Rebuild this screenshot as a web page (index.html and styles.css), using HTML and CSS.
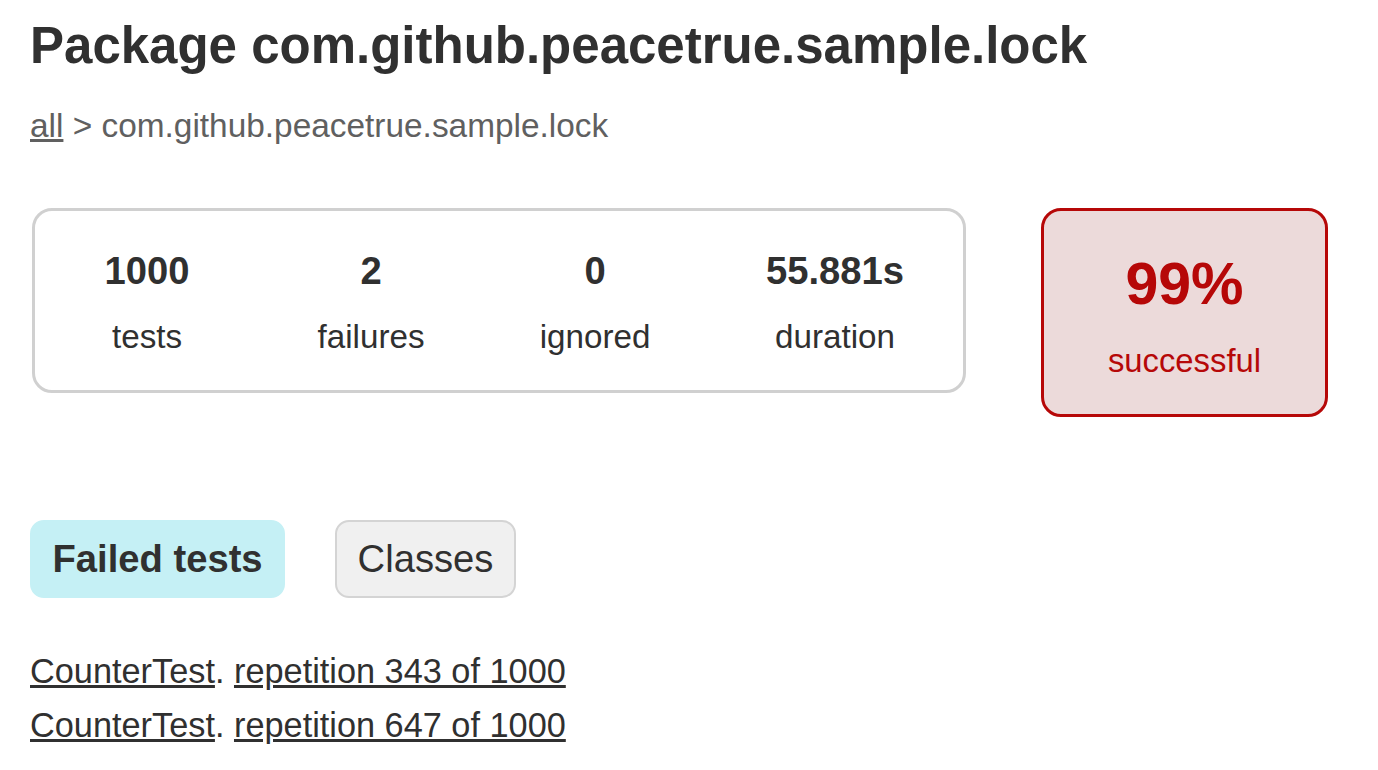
FILE: index.html
```html
<!DOCTYPE html>
<html lang="en">
<head>
<meta charset="utf-8">
<title>Test results - Package com.github.peacetrue.sample.lock</title>
<link rel="stylesheet" href="styles.css">
</head>
<body>
<div class="content">
  <h1 class="title">Package com.github.peacetrue.sample.lock</h1>
  <div class="breadcrumbs"><a href="#" class="crumb-link">all</a> &gt; com.github.peacetrue.sample.lock</div>

  <div class="summary">
    <div class="summary-group">
      <div class="info-box">
        <div class="counter">1000</div>
        <div class="label">tests</div>
      </div>
      <div class="info-box">
        <div class="counter">2</div>
        <div class="label">failures</div>
      </div>
      <div class="info-box">
        <div class="counter">0</div>
        <div class="label">ignored</div>
      </div>
      <div class="info-box info-box-wide">
        <div class="counter">55.881s</div>
        <div class="label">duration</div>
      </div>
    </div>
    <div class="success-rate">
      <div class="percent">99%</div>
      <div class="label">successful</div>
    </div>
  </div>

  <ul class="tabs">
    <li class="tab tab-selected">Failed tests</li>
    <li class="tab">Classes</li>
  </ul>

  <ul class="link-list">
    <li class="link-item"><a href="#" class="link">CounterTest</a>. <a href="#" class="link">repetition 343 of 1000</a></li>
    <li class="link-item"><a href="#" class="link">CounterTest</a>. <a href="#" class="link">repetition 647 of 1000</a></li>
  </ul>
</div>
</body>
</html>
```

FILE: styles.css
```css
html, body {
  margin: 0;
  padding: 0;
  background: #ffffff;
}

body {
  font-family: "Liberation Sans", Arial, sans-serif;
  color: #303030;
}

.content {
  padding: 16px 30px 0 30px;
  display: flex;
  flex-direction: column;
  align-items: flex-start;
}

.title {
  margin: 0;
  font-size: 51px;
  line-height: 59px;
  font-weight: bold;
  color: #303030;
  white-space: nowrap;
}

.breadcrumbs {
  margin-top: 31.6px;
  font-size: 33.4px;
  line-height: 38px;
  color: #606060;
  white-space: nowrap;
}

.crumb-link {
  color: #606060;
  text-decoration: underline;
}

.summary {
  margin-top: 63.4px;
  display: flex;
  align-items: flex-start;
}

.summary-group {
  margin-left: 2px;
  display: flex;
  border: 3px solid #d0d0d0;
  border-radius: 20px;
}

.info-box {
  width: 220px;
  margin: 0 2px;
  padding: 38px 0 34px;
  text-align: center;
}

.info-box-wide {
  width: 252px;
}

.counter {
  font-size: 38.2px;
  line-height: 44px;
  font-weight: bold;
  margin-bottom: 25px;
}

.label {
  font-size: 33.2px;
  line-height: 38px;
  white-space: nowrap;
}

.success-rate {
  margin-left: 75px;
  width: 281px;
  padding: 39px 0 34px;
  text-align: center;
  border: 3px solid #b60808;
  border-radius: 20px;
  background: #ecdada;
  color: #b60808;
}

.percent {
  font-size: 59px;
  line-height: 68px;
  font-weight: bold;
  margin-bottom: 24px;
}

.success-rate .label {
  font-size: 32.8px;
}

.tabs {
  list-style: none;
  margin: 103px 0 0 0;
  padding: 0;
  display: flex;
  gap: 50px;
}

.tab {
  padding: 15px 20.5px;
  border: 2px solid #d4d4d4;
  border-radius: 14px;
  background: #f0f0f0;
  font-size: 38.2px;
  line-height: 44px;
  white-space: nowrap;
}

.tab-selected {
  background: #c5f0f5;
  border-color: #c5f0f5;
  font-weight: bold;
}

.link-list {
  list-style: none;
  margin: 51.4px 0 0 0;
  padding: 0;
}

.link-item {
  font-size: 34.3px;
  line-height: 44px;
  margin-bottom: 10px;
  white-space: nowrap;
}

.link {
  color: #303030;
  text-decoration: underline;
}
```
